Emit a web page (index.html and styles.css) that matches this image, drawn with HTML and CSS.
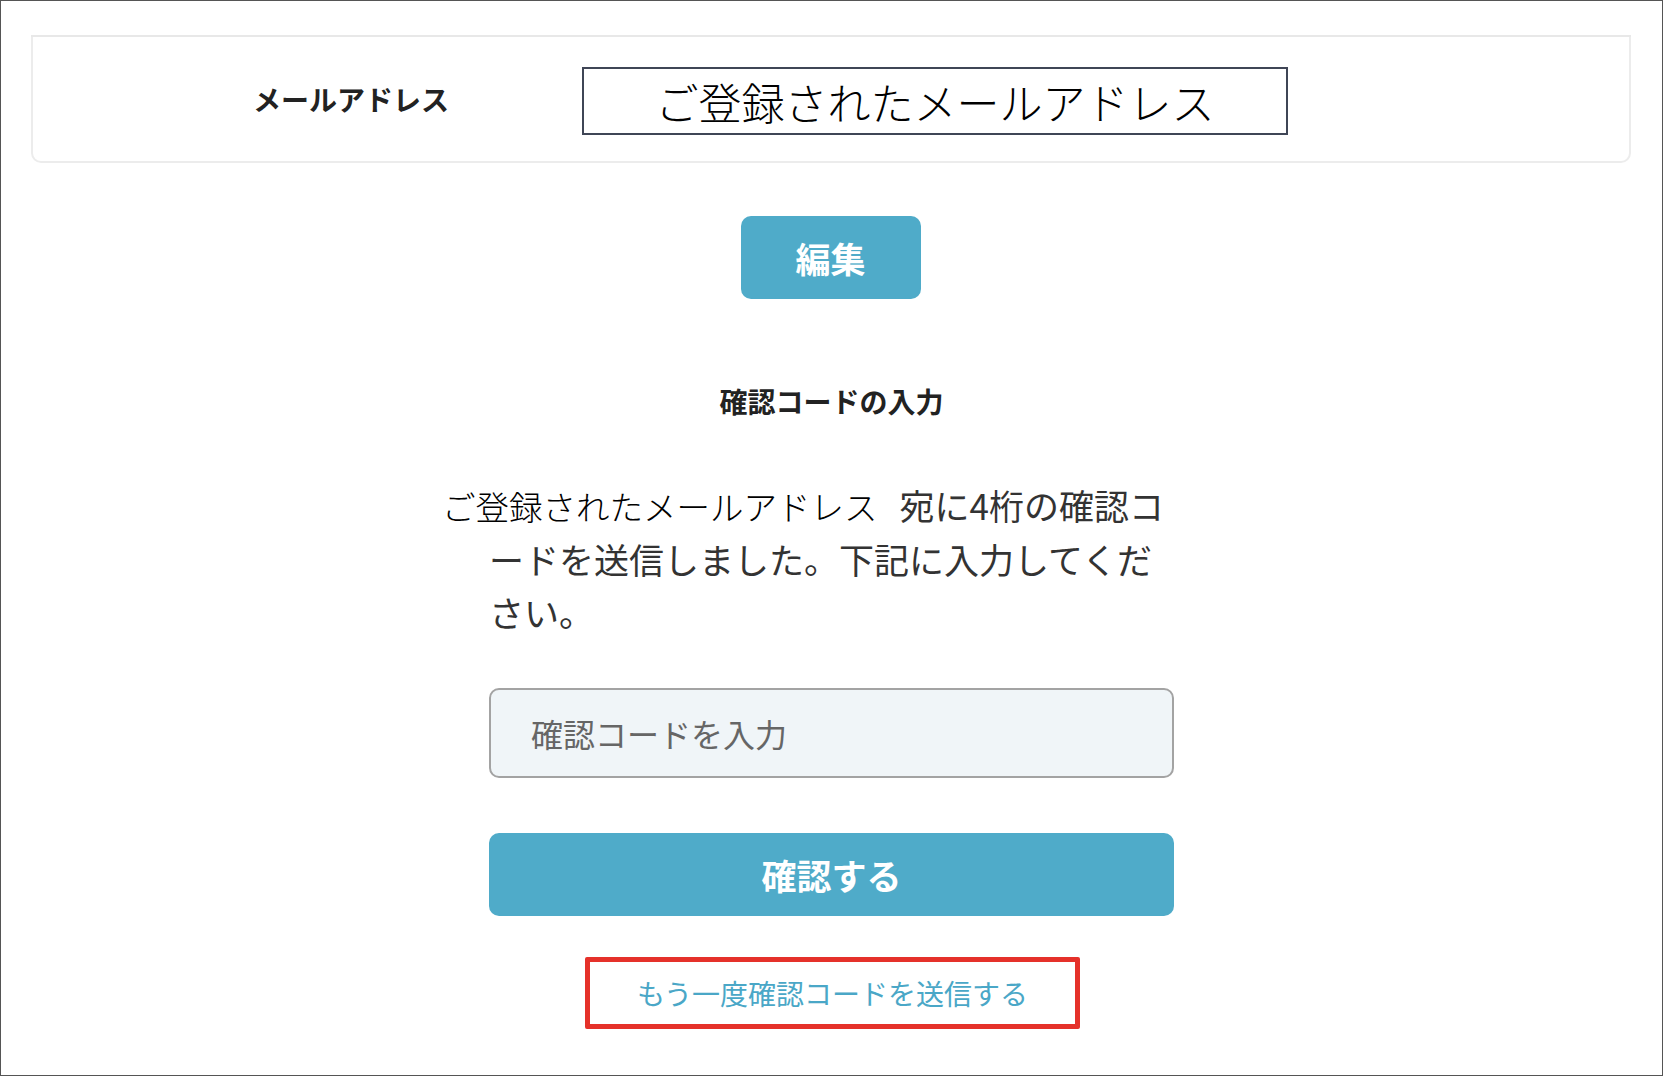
FILE: index.html
```html
<!DOCTYPE html>
<html lang="ja">
<head>
<meta charset="utf-8">
<title>確認コードの入力</title>
<link rel="stylesheet" href="styles.css">
</head>
<body>
<div class="frame">
  <div class="card-wrap">
    <div class="card">
      <div class="label">メールアドレス</div>
      <div class="email-box">ご登録されたメールアドレス</div>
    </div>
  </div>

  <div class="edit-row">
    <button class="btn-edit" type="button">編集</button>
  </div>

  <h2 class="heading">確認コードの入力</h2>

  <div class="column">
    <p class="message"><span class="email-inline">ご登録されたメールアドレス</span>宛に4桁の確認コードを送信しました。下記に入力してください。</p>
    <input class="code-input" type="text" placeholder="確認コードを入力">
    <button class="btn-confirm" type="button">確認する</button>
  </div>

  <div class="resend-row">
    <a class="resend" href="#">もう一度確認コードを送信する</a>
  </div>
</div>
</body>
</html>
```

FILE: styles.css
```css
* {
  box-sizing: border-box;
}

html, body {
  margin: 0;
  padding: 0;
  background: #ffffff;
}

body {
  font-family: "Noto Sans CJK JP", "Noto Sans", sans-serif;
  color: #333333;
}

.frame {
  width: 1663px;
  height: 1076px;
  border: 1px solid #555555;
  padding-top: 34px;
  display: flex;
  flex-direction: column;
  overflow: hidden;
}

.card-wrap {
  width: 1600px;
  margin-left: 30px;
  border-top: 2px solid #e8e8e8;
}

.card {
  height: 126px;
  border: 2px solid #ececec;
  border-top: none;
  border-radius: 0 0 10px 10px;
  display: flex;
  align-items: center;
}

.label {
  width: 196px;
  margin-left: 220px;
  font-size: 28px;
  font-weight: 700;
  color: #222222;
  line-height: 1;
  white-space: nowrap;
}

.email-box {
  width: 706px;
  height: 68px;
  margin-left: 133px;
  margin-top: 4px;
  border: 2px solid #3f4656;
  display: flex;
  align-items: center;
  justify-content: center;
  font-size: 43px;
  font-weight: 300;
  color: #000000;
  line-height: 1;
  white-space: nowrap;
}

.edit-row {
  display: flex;
  justify-content: center;
  margin-top: 53px;
}

.btn-edit {
  width: 180px;
  height: 83px;
  border: none;
  border-radius: 10px;
  background: #4fabc9;
  color: #ffffff;
  font-family: inherit;
  font-size: 35px;
  font-weight: 700;
  line-height: 1;
  margin-left: -2px;
}

.heading {
  margin: 81px 0 0;
  text-align: center;
  font-size: 28px;
  font-weight: 700;
  line-height: 42px;
  color: #222222;
}

.column {
  width: 685px;
  margin: 56px auto 0;
  display: flex;
  flex-direction: column;
}

.message {
  margin: 0;
  font-size: 35px;
  line-height: 53px;
  color: #333333;
  text-indent: -47px;
}

.email-inline {
  font-size: 33.5px;
  font-weight: 300;
  color: #000000;
  margin-right: 22px;
}

.code-input {
  margin-top: 50px;
  height: 90px;
  width: 100%;
  border: 2px solid #a3a3a3;
  border-radius: 10px;
  background: #f0f5f8;
  padding: 0 0 0 40px;
  font-family: inherit;
  font-size: 32px;
  color: #333333;
  outline: none;
}

.code-input::placeholder {
  color: #666666;
}

.btn-confirm {
  margin-top: 55px;
  height: 83px;
  width: 100%;
  border: none;
  border-radius: 10px;
  background: #4fabc9;
  color: #ffffff;
  font-family: inherit;
  font-size: 35px;
  font-weight: 700;
  line-height: 1;
}

.resend-row {
  display: flex;
  justify-content: center;
  margin-top: 41px;
}

.resend {
  width: 495px;
  height: 72px;
  border: 5px solid #e5312a;
  border-radius: 2px;
  display: flex;
  align-items: center;
  justify-content: center;
  font-size: 28px;
  color: #4aa7c7;
  text-decoration: none;
  white-space: nowrap;
  margin-left: 2px;
}
```
